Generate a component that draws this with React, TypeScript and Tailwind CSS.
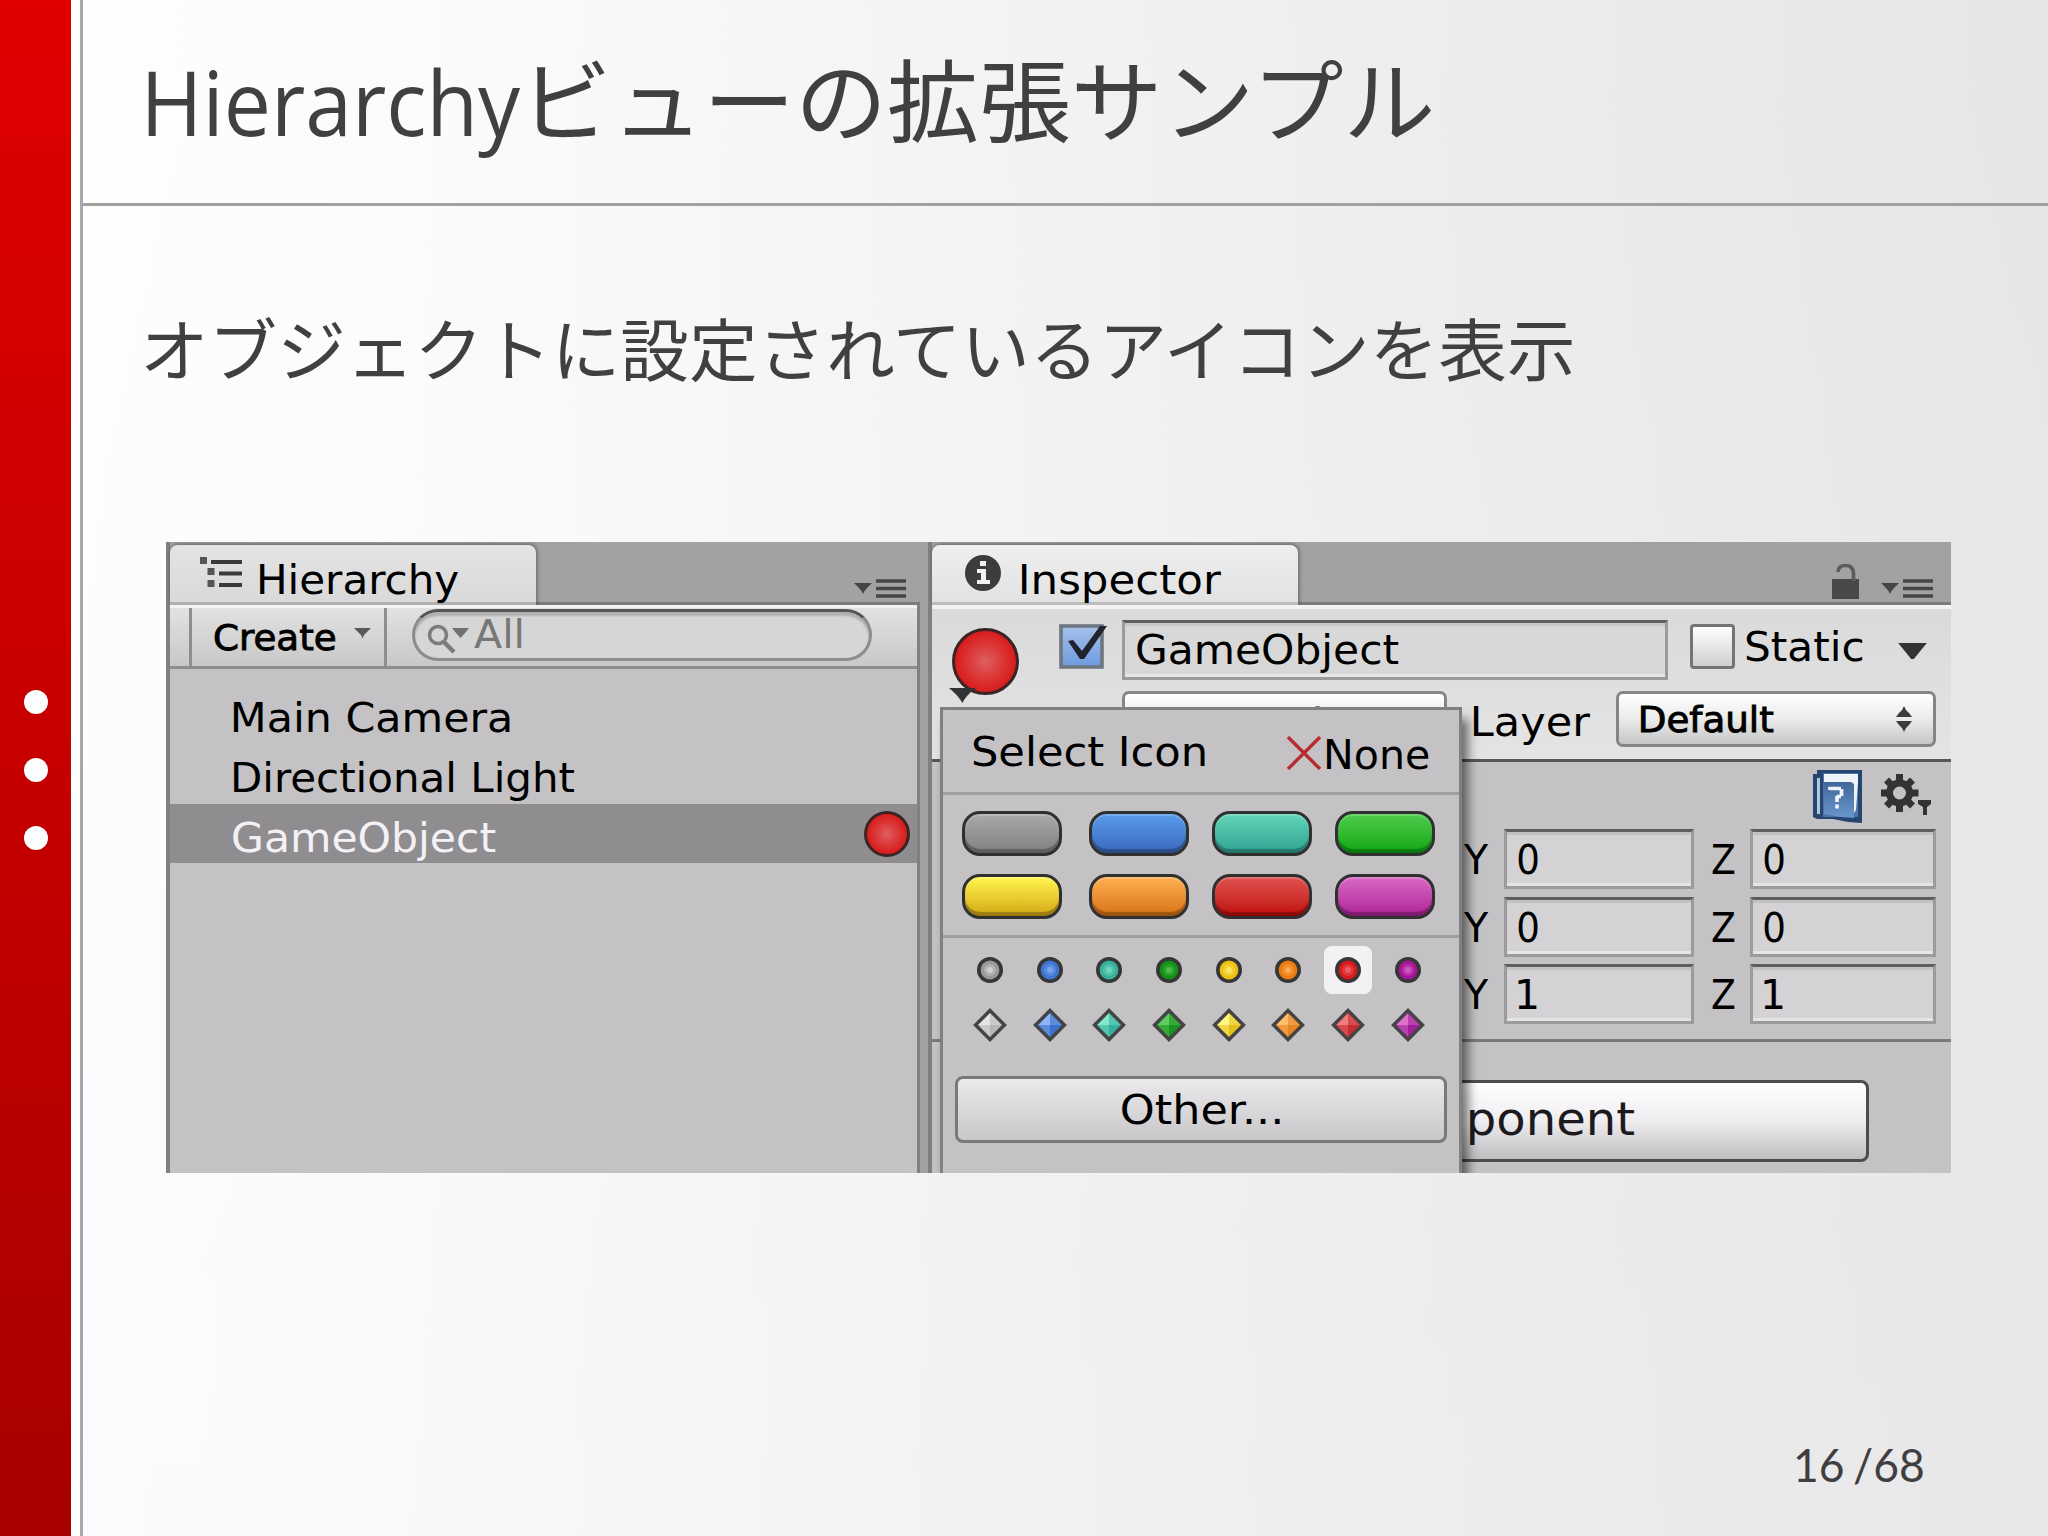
import React, { useLayoutEffect, useRef, useState } from "react";

const UI = "font-['DejaVu_Sans',sans-serif] leading-none translate-y-px";

/** One line of text whose ink is stretched to the width of its own box. */
function Fit({ className = "", children }: { className?: string; children: string }) {
  const ref = useRef<HTMLSpanElement>(null);
  const [transform, setTransform] = useState("none");
  useLayoutEffect(() => {
    const el = ref.current;
    const ctx = document.createElement("canvas").getContext("2d");
    if (!el || !ctx) return;
    const cs = getComputedStyle(el);
    ctx.font = `${cs.fontWeight} ${cs.fontSize} ${cs.fontFamily}`;
    const m = ctx.measureText(children);
    const ink = m.actualBoundingBoxLeft + m.actualBoundingBoxRight;
    const s = el.clientWidth / ink;
    setTransform(`translateX(${m.actualBoundingBoxLeft * s}px) scaleX(${s})`);
  }, [children]);
  return (
    <span ref={ref} className={`block shrink-0 whitespace-nowrap ${className}`}>
      <span className="inline-block origin-left" style={{ transform }}>
        {children}
      </span>
    </span>
  );
}

function MenuGlyph() {
  return (
    <svg width="54" height="22" viewBox="0 0 54 22" className="block shrink-0">
      <path d="M0 4h18l-4 4-3.500 4L9 15l-1.500-3L4 8z" fill="#454545" />
      <path d="M22 2h30M22 9.5h30M22 17h30" stroke="#454545" strokeWidth="3.7" />
    </svg>
  );
}

function RedBall({ className }: { className: string }) {
  return (
    <span
      className={`block shrink-0 rounded-full border-[3px] border-[#3a2424] bg-[radial-gradient(circle,#de6060_0%,#dc3c3c_35%,#d81c1c_70%,#b81212_100%)] ${className}`}
    />
  );
}

function Field({ className, children }: { className: string; children: React.ReactNode }) {
  return (
    <div
      className={`flex h-[60px] shrink-0 items-start border-[3.5px] border-[#9c9a9d] border-t-[#5f5d60] shadow-[inset_0_-3px_0_rgba(255,255,255,0.4),inset_0_3px_0_rgba(0,0,0,0.08)] ${className}`}
    >
      {children}
    </div>
  );
}

function UpDown() {
  return (
    <svg width="16" height="26" viewBox="0 0 16 26" className="block shrink-0">
      <path d="M8 0l2 4 3 3 3 4H0l3-4 3-3zM8 26l2-4 3-3 3-4H0l3 4 3 3z" fill="#3c3c3c" />
    </svg>
  );
}

function Dropdown({ className, children }: { className: string; children: React.ReactNode }) {
  return (
    <div
      className={`flex h-[56px] shrink-0 items-start rounded-[7px] border-[3.5px] border-[#858585] bg-linear-to-b from-white via-[#ebebeb] to-[#c6c6c6] ${className}`}
    >
      {children}
    </div>
  );
}

const pills = [
  "from-[#aaa8a9] to-[#828082]",
  "from-[#5a9cec] to-[#3b68bc]",
  "from-[#62d4b8] to-[#2ea392]",
  "from-[#4ccb4a] to-[#06a80c]",
  "from-[#fff64c] to-[#d4a810]",
  "from-[#ffb050] to-[#d87212]",
  "from-[#e0504e] to-[#c00404]",
  "from-[#d868c4] to-[#ae2098]",
];

const swatches = [
  ["#9a989b", "#e6e4e7", "#b8b6b9"],
  ["#3f74d0", "#8db6f8", "#3d72cc"],
  ["#38b09c", "#84e6cc", "#38b09c"],
  ["#129018", "#62cc60", "#1c9420"],
  ["#ecc212", "#fff684", "#e6c01c"],
  ["#ea7c10", "#ffbe70", "#e68420"],
  ["#d81a1c", "#f07c80", "#c82c30"],
  ["#a81498", "#dc74cc", "#a0209a"],
];

function Diamond({ light, dark }: { light: string; dark: string }) {
  return (
    <svg width="34" height="34" viewBox="0 0 34 34" className="block">
      <path d="M17 2L32 17 17 32 2 17z" fill={dark} />
      <path d="M17 5v12H5z" fill={light} />
      <path d="M17 5l12 12H17zM5 17h12v12z" fill={light} opacity=".4" />
      <path d="M17 2.500L31.500 17 17 31.500 2.500 17z" fill="none" stroke="#444" strokeWidth="3.4" />
    </svg>
  );
}

function HierarchyPane() {
  return (
    <section className="flex w-[754px] shrink-0 flex-col border-l-4 border-[#808080]">
      <div className="flex h-[63px] justify-between border-b-[3px] border-[#7c7c7c]">
        <div className="-mb-[3px] mt-[3px] flex h-[60px] w-[366px] items-start rounded-t-[8px] border-b-[3px] border-[#b0b0b0] bg-linear-to-b from-[#e4e4e4] to-[#d9d9d9] shadow-[1px_-1px_4px_rgba(0,0,0,0.4)]">
          <svg width="42" height="31" viewBox="0 0 42 31" className="ml-[30px] mt-[12px] block shrink-0">
            <path d="M0 0h7v7H0zM7.500 11h7v7h-7zM7.500 23h7v7h-7z" fill="#555" />
            <path d="M11 5h31M19 16.500h23M19 28h23" stroke="#3a3a3a" strokeWidth="3.8" />
          </svg>
          <Fit className={`${UI} ml-[18px] mt-[14px] w-[199px] text-[41px] text-black`}>Hierarchy</Fit>
        </div>
        <div className="mr-[12px] mt-[37px]">
          <MenuGlyph />
        </div>
      </div>
      <div className="flex flex-1 flex-col border-r-[3px] border-[#808080] bg-[#c4c2c5]">
        <div className="flex h-[64px] items-start border-b-[3px] border-t-[3px] border-b-[#8e8e8e] border-t-[#f2f2f2] bg-linear-to-b from-[#e2e2e2] to-[#c8c8c8]">
          <div className="ml-[19px] flex h-[58px] w-[198px] shrink-0 items-start border-x-[3px] border-[#8e8e8e]">
            <Fit className={`${UI} ml-[22px] mt-[12px] w-[121px] text-[35px] text-black [-webkit-text-stroke:0.9px_black]`}>
              Create
            </Fit>
            <svg width="18" height="11" viewBox="0 0 18 11" className="ml-[19px] mt-[20px] block">
              <path d="M0 0h17l-4 4-3 3-1.500 3.500L7 7 4 4z" fill="#585858" />
            </svg>
          </div>
          <div className="ml-[25px] mt-[1px] flex h-[52px] w-[460px] items-start rounded-full border-[3px] border-[#8c8c8c] border-t-[#555] bg-[#d6d6d6] shadow-[inset_0_4px_2px_rgba(0,0,0,0.18)]">
            <svg width="46" height="36" viewBox="0 0 46 36" className="ml-[12px] mt-[10px] block shrink-0">
              <circle cx="11" cy="13" r="8.500" fill="none" stroke="#7c7c7c" strokeWidth="3.500" />
              <path d="M17 20l10 10" stroke="#7c7c7c" strokeWidth="4.500" />
              <path d="M25 6h17l-4 5-4.500 5-4.500-5z" fill="#707070" />
            </svg>
            <Fit className={`${UI} ml-[1px] mt-[2px] w-[48px] text-[39px] text-[#777]`}>All</Fit>
          </div>
        </div>
        <ul className="pt-[15px]">
          <li className="flex h-[60px] items-start pl-[64px]">
            <Fit className={`${UI} mt-[13px] w-[276px] text-[41px] text-black`}>Main Camera</Fit>
          </li>
          <li className="flex h-[60px] items-start pl-[64px]">
            <Fit className={`${UI} mt-[13px] w-[341px] text-[41px] text-black`}>Directional Light</Fit>
          </li>
          <li className="flex h-[59px] items-start justify-between bg-[#8f8d90] pl-[63px] pr-[7px]">
            <Fit className={`${UI} mt-[13px] w-[263px] text-[41px] text-[#f3f1f5]`}>GameObject</Fit>
            <RedBall className="mt-[7px] h-[46px] w-[46px]" />
          </li>
        </ul>
      </div>
    </section>
  );
}

function VectorRow({ y, z }: { y: string; z: string }) {
  const digit = y === "1" ? "w-[19px]" : "w-[20px]";
  return (
    <div className="flex h-[60px] items-start pl-[531px]">
      <Fit className={`${UI} mt-[10px] w-[26px] text-[41px] text-black`}>Y</Fit>
      <Field className="ml-[15px] w-[190px] bg-[#d4d2d5]">
        <Fit className={`${UI} ml-[11px] mt-[7px] text-[41px] text-black ${digit}`}>{y}</Fit>
      </Field>
      <Fit className={`${UI} ml-[18px] mt-[10px] w-[23px] text-[41px] text-black`}>Z</Fit>
      <Field className="ml-[15px] w-[186px] bg-[#d4d2d5]">
        <Fit className={`${UI} ml-[11px] mt-[7px] text-[41px] text-black ${digit}`}>{z}</Fit>
      </Field>
    </div>
  );
}

function IconPopup() {
  return (
    <div className="absolute left-[774px] top-[165px] flex h-[480px] w-[522px] flex-col border-[3px] border-[#818082] bg-[#c4c2c5] shadow-[6px_12px_10px_rgba(0,0,0,0.55)]">
      <div className="flex h-[85px] shrink-0 items-start border-b-[3px] border-[#a09ea1] pl-[30px]">
        <Fit className={`${UI} mt-[21px] w-[232px] text-[41px] text-black`}>Select Icon</Fit>
        <svg width="34" height="34" viewBox="0 0 34 34" className="ml-[82px] mt-[26px] block shrink-0">
          <path d="M1 1l32 32M33 1L1 33" stroke="#b82c30" strokeWidth="3.400" />
        </svg>
        <Fit className={`${UI} ml-[6px] mt-[24px] w-[102px] text-[41px] text-black`}>None</Fit>
      </div>
      <div className="grid h-[143px] shrink-0 grid-cols-[127px_123px_123px_101px] content-start gap-y-[18px] border-b-[3px] border-[#a09ea1] pl-[19px] pt-[16px]">
        {pills.map((p) => (
          <span
            key={p}
            className={`block h-[45px] w-[100px] rounded-[18px] border-[3.5px] border-[#303030] bg-linear-to-b shadow-[inset_0_-4px_1px_rgba(0,0,0,0.28),inset_0_2px_1px_rgba(255,255,255,0.2)] ${p}`}
          />
        ))}
      </div>
      <div className="mt-[8px] flex shrink-0 pl-[17px]">
        {swatches.map(([c, light], i) => (
          <span key={c} className="flex w-[59.7px] shrink-0 justify-center">
            <span
              className={`flex h-[48px] w-[48px] items-center justify-center rounded-[8px] ${i === 6 ? "bg-[#f3f1f4]" : ""}`}
            >
              <svg width="28" height="28" viewBox="0 0 28 28" className="block">
                <circle cx="14" cy="14" r="11.200" fill={c} stroke="#363636" strokeWidth="3.600" />
                <circle cx="14" cy="14" r="6" fill={light} opacity=".3" />
                <circle cx="14" cy="14" r="3" fill={light} opacity=".6" />
              </svg>
            </span>
          </span>
        ))}
      </div>
      <div className="mt-[14px] flex shrink-0 pl-[17px]">
        {swatches.map(([c, light, dark]) => (
          <span key={c} className="flex w-[59.7px] shrink-0 justify-center">
            <Diamond light={light} dark={dark} />
          </span>
        ))}
      </div>
      <div className="ml-[12px] mt-[34px] flex h-[67px] w-[492px] shrink-0 items-start rounded-[8px] border-[3px] border-[#7a787b] bg-linear-to-b from-[#ebe9ec] to-[#c9c7ca]">
        <Fit className={`${UI} ml-[164px] mt-[10px] w-[158px] text-[41px] text-black`}>Other...</Fit>
      </div>
    </div>
  );
}

function InspectorPane() {
  return (
    <section className="ml-[8px] flex flex-1 flex-col border-l-4 border-[#808080]">
      <div className="flex h-[63px] items-start border-b-[3px] border-[#7c7c7c]">
        <div className="-mb-[3px] mt-[3px] flex h-[60px] w-[366px] shrink-0 items-start rounded-t-[8px] border-b-[3px] border-[#bcbcbc] bg-linear-to-b from-[#efefef] to-[#e2e2e2] shadow-[1px_-1px_4px_rgba(0,0,0,0.4)]">
          <svg width="38" height="38" viewBox="0 0 38 38" className="ml-[32px] mt-[9px] block shrink-0">
            <circle cx="19" cy="19" r="18" fill="#3c3c3c" />
            <path d="M16 7h6v5h-6zM13 15h9v11h4v4H13v-4h4v-7h-4z" fill="#f2f2f2" />
          </svg>
          <Fit className={`${UI} ml-[20px] mt-[14px] w-[199px] text-[41px] text-black`}>Inspector</Fit>
        </div>
        <svg width="28" height="36" viewBox="0 0 28 36" className="ml-[534px] mt-[21px] block shrink-0">
          <path d="M0 16h27v20H0z" fill="#484848" />
          <path d="M6 9q0-6.500 7.500-6.500T21.500 10v8" fill="none" stroke="#5c5c5c" strokeWidth="3.600" />
        </svg>
        <div className="ml-[21px] mt-[37px]">
          <MenuGlyph />
        </div>
      </div>

      <div className="flex h-[157px] shrink-0 flex-col border-b-[3px] border-t-[4px] border-b-[#575558] border-t-[#f4f4f4] bg-linear-to-b from-[#dadada] to-[#e4e4e4]">
        <div className="flex h-[82px] shrink-0 items-start">
          <div className="relative ml-[20px] mt-[19px]">
            <RedBall className="h-[67px] w-[67px]" />
            <svg width="27" height="16" viewBox="0 0 27 16" className="absolute -left-[3px] top-[60px] block">
              <path d="M0 0h27l-5 4-4 4-3 4-1.500 3-2-3-3-4-4-4z" fill="#333" />
            </svg>
          </div>
          <svg width="48" height="45" viewBox="0 0 48 45" className="ml-[40px] mt-[15px] block shrink-0">
            <defs>
              <linearGradient id="check" x1="0" y1="0" x2="0" y2="1">
                <stop offset="0" stopColor="#a6c0ea" />
                <stop offset="1" stopColor="#6e9ae0" />
              </linearGradient>
            </defs>
            <rect x="2" y="2" width="41" height="41" fill="url(#check)" stroke="#6e7680" strokeWidth="3.600" />
            <path d="M9 17l5-1 9 11L41 2h7L25 35h-4z" fill="#20242c" />
          </svg>
          <Field className="ml-[15px] mt-[11px] w-[546px] bg-[#d8d8d8]">
            <Fit className={`${UI} ml-[12px] mt-[6px] w-[262px] text-[41px] text-black`}>GameObject</Fit>
          </Field>
          <span className="ml-[22px] mt-[15px] block h-[45px] w-[45px] shrink-0 rounded-[4px] border-[3.5px] border-[#747474] bg-linear-to-b from-white to-[#cfcfcf]" />
          <Fit className={`${UI} ml-[11px] mt-[17px] w-[116px] text-[41px] text-black`}>Static</Fit>
          <svg width="29" height="17" viewBox="0 0 32 19" className="ml-[36px] mt-[34px] block shrink-0">
            <path d="M0 0h32L17.500 18h-3z" fill="#333" />
          </svg>
        </div>
        <div className="flex items-start">
          <Dropdown className="ml-[190px] w-[325px]">
            <Fit className={`${UI} ml-[22px] mt-[10px] w-[173px] text-[35px] text-black [-webkit-text-stroke:0.9px_black]`}>
              Untagged
            </Fit>
          </Dropdown>
          <Fit className={`${UI} ml-[27px] mt-[10px] w-[116px] text-[41px] text-black`}>Layer</Fit>
          <Dropdown className="ml-[26px] w-[320px]">
            <Fit className={`${UI} ml-[22px] mt-[8px] w-[132px] text-[35px] text-black [-webkit-text-stroke:0.9px_black]`}>
              Default
            </Fit>
            <span className="ml-[123px] mt-[12px]">
              <UpDown />
            </span>
          </Dropdown>
        </div>
      </div>

      <div className="flex h-[280px] shrink-0 flex-col border-b-[3px] border-[#7b797c] bg-[#c4c2c5]">
        <div className="flex h-[67px] shrink-0 items-start pl-[881px] pt-[8px]">
          <svg width="50" height="54" viewBox="0 0 50 54" className="block shrink-0">
            <defs>
              <linearGradient id="book" x1="0" y1="0" x2="0" y2="1">
                <stop offset="0" stopColor="#41679a" />
                <stop offset="1" stopColor="#6a96cc" />
              </linearGradient>
            </defs>
            <path d="M0 4h4V0h45v53l-14-1-15-3H4l-4-2z" fill="#24466f" />
            <path d="M4 8h3v36H4z" fill="#b4c6de" />
            <path d="M10 3h35v44H10z" fill="#4d74a8" />
            <path d="M11 4h34v8l-2 28-4 6-2-33H11z" fill="#eef3fa" />
            <path d="M11 12h27l3 2v34l-13-1-17-3z" fill="url(#book)" />
            <path
              d="M17 20v-1.500h11M28.500 19v7M28 26.500h-4.500M24 26v6M24 34.500v4"
              fill="none"
              stroke="#eef4fb"
              strokeWidth="3.700"
            />
          </svg>
          <svg width="52" height="48" viewBox="0 0 52 48" className="ml-[18px] mt-[4px] block shrink-0">
            <circle cx="18.500" cy="19" r="10" fill="none" stroke="#333" strokeWidth="7" />
            <path
              d="M18.500 0v8M18.500 30v8M-0.500 19h8M29.500 19h8M5.500 6l6 6M25.500 26l6 6M31.500 6l-6 6M11.500 26l-6 6"
              stroke="#333"
              strokeWidth="7"
            />
            <path d="M37 26h13v4l-4 3v8h-4v-8l-5-3z" fill="#333" />
          </svg>
        </div>
        <div className="flex flex-col gap-[7.5px]">
          <VectorRow y="0" z="0" />
          <VectorRow y="0" z="0" />
          <VectorRow y="1" z="1" />
        </div>
      </div>
      <div className="flex flex-1 items-start bg-[#c4c2c5]">
        <div className="ml-[159px] mt-[38px] flex h-[82px] w-[778px] items-start rounded-[8px] border-[3.5px] border-[#4e4c4f] bg-linear-to-b from-white via-[#efedf0] to-[#c0bec1]">
          <Fit className={`${UI} ml-[376px] mt-[12px] w-[164px] text-[46px] text-[#1c1a1d]`}>ponent</Fit>
        </div>
      </div>
    </section>
  );
}

export default function App() {
  return (
    <div className="flex h-[1536px] w-[2048px] overflow-hidden bg-white">
      <aside className="flex w-[71px] shrink-0 flex-col items-center gap-[44px] bg-linear-to-b from-[#e00000] via-[#c60000] to-[#a80000] pt-[690px]">
        <span className="block h-[24px] w-[24px] rounded-full bg-[#fdfffe]" />
        <span className="block h-[24px] w-[24px] rounded-full bg-[#fdfffe]" />
        <span className="block h-[24px] w-[24px] rounded-full bg-[#fdfffe]" />
      </aside>
      <div className="ml-[9px] flex flex-1 flex-col border-l-[3px] border-[#a3a9ae] bg-[linear-gradient(180deg,rgba(215,255,215,0.03),rgba(248,246,250,0.1)_50%,rgba(248,240,254,0.2)),linear-gradient(96deg,#fefefe_0%,#fbfcfb_17%,#f4f5f4_40%,#edeeed_62%,#e7e8e7_85%,#e4e5e4_100%)]">
        <header className="flex h-[206px] shrink-0 items-start border-b-[3px] border-[#a0a2a0] text-[#3f413e]">
          <Fit className="ml-[65px] mt-[56px] w-[373px] font-['Open_Sans',sans-serif] text-[90px] leading-none">
            Hierarchy
          </Fit>
          <Fit className="ml-[15px] mt-[51px] w-[898px] font-['Noto_Sans_CJK_JP',sans-serif] text-[90px] leading-none">
            ビューの拡張サンプル
          </Fit>
        </header>
        <Fit className="ml-[62px] mt-[107px] w-[1432px] font-['Noto_Sans_CJK_JP',sans-serif] text-[68px] leading-none text-[#3f413e]">
          オブジェクトに設定されているアイコンを表示
        </Fit>
        <div className="relative ml-[83px] mt-[161px] flex h-[631px] w-[1785px] shrink-0 overflow-hidden bg-[#a2a2a2]">
          <HierarchyPane />
          <InspectorPane />
          <IconPopup />
        </div>
        <footer className="mt-[269px] flex">
          <Fit className="ml-[1713px] w-[130px] font-['Lato',sans-serif] text-[46px] leading-none text-[#403e41] [word-spacing:-3px]">
            16 /68
          </Fit>
        </footer>
      </div>
    </div>
  );
}
